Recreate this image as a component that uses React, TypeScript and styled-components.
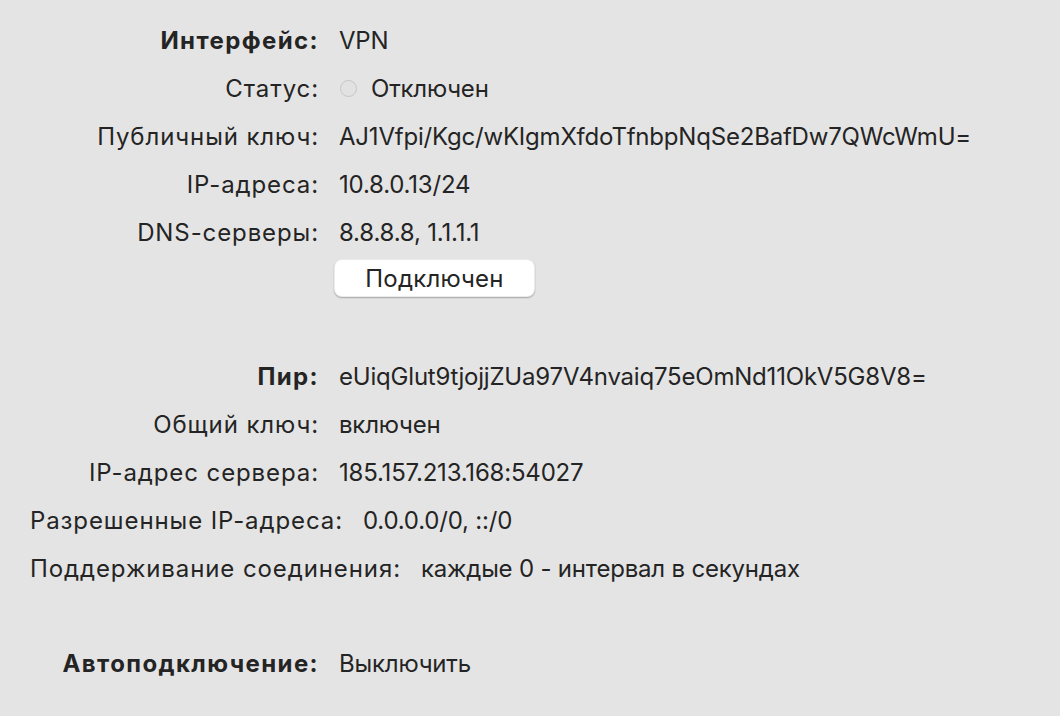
import React from 'react';
import styled, { createGlobalStyle } from 'styled-components';

const GlobalStyle = createGlobalStyle`
  html, body {
    margin: 0;
    padding: 0;
    background: #e4e4e4;
  }
  body {
    font-family: Inter, "Noto Sans", "Liberation Sans", sans-serif;
    color: #242424;
    -webkit-font-smoothing: antialiased;
  }
`;

const Page = styled.div`
  width: 1060px;
  height: 716px;
  box-sizing: border-box;
  padding-top: 16px;
  background: #e4e4e4;
  overflow: hidden;
`;

const Section = styled.div<{ $gap?: number }>`
  display: flex;
  flex-direction: column;
  margin-top: ${p => p.$gap ?? 0}px;
`;

const Row = styled.div`
  display: flex;
  align-items: center;
  height: 48px;
  gap: 20px;
  padding-left: 30px;
  font-size: 24px;
  white-space: nowrap;
`;

const Label = styled.div<{ $bold?: boolean }>`
  min-width: 289px;
  text-align: right;
  letter-spacing: ${p => (p.$bold ? 1.4 : 0.9)}px;
  font-weight: ${p => (p.$bold ? 700 : 400)};
`;

const Value = styled.div`
  display: flex;
  align-items: center;
  gap: 14px;
  letter-spacing: -0.2px;
`;

const StatusDot = styled.span`
  width: 17px;
  height: 17px;
  margin-left: 1px;
  border-radius: 50%;
  background: #e2e2e2;
  border: 1px solid #c6c6c6;
  box-sizing: border-box;
`;

const ButtonRow = styled.div`
  display: flex;
  align-items: center;
  height: 44px;
  padding-left: 334px;
`;

const Button = styled.button`
  width: 201px;
  height: 38px;
  padding: 0;
  background: #ffffff;
  border: 0.5px solid rgba(0, 0, 0, 0.08);
  border-radius: 8px;
  box-shadow: 0 1px 1.5px rgba(0, 0, 0, 0.28);
  font-family: inherit;
  font-size: 24px;
  letter-spacing: 0.2px;
  color: #242424;
  cursor: pointer;
`;

const interfaceRows = [
  { label: 'Публичный ключ:', value: 'AJ1Vfpi/Kgc/wKIgmXfdoTfnbpNqSe2BafDw7QWcWmU=' },
  { label: 'IP-адреса:', value: '10.8.0.13/24' },
  { label: 'DNS-серверы:', value: '8.8.8.8, 1.1.1.1' },
];

const peerRows = [
  { label: 'Общий ключ:', value: 'включен' },
  { label: 'IP-адрес сервера:', value: '185.157.213.168:54027' },
  { label: 'Разрешенные IP-адреса:', value: '0.0.0.0/0, ::/0' },
  { label: 'Поддерживание соединения:', value: 'каждые 0 - интервал в секундах' },
];

export default function App() {
  return (
    <Page>
      <GlobalStyle />
      <Section>
        <Row>
          <Label $bold>Интерфейс:</Label>
          <Value>VPN</Value>
        </Row>
        <Row>
          <Label>Статус:</Label>
          <Value>
            <StatusDot />
            Отключен
          </Value>
        </Row>
        {interfaceRows.map(r => (
          <Row key={r.label}>
            <Label>{r.label}</Label>
            <Value>{r.value}</Value>
          </Row>
        ))}
        <ButtonRow>
          <Button>Подключен</Button>
        </ButtonRow>
      </Section>

      <Section $gap={52}>
        <Row>
          <Label $bold>Пир:</Label>
          <Value>eUiqGlut9tjojjZUa97V4nvaiq75eOmNd11OkV5G8V8=</Value>
        </Row>
        {peerRows.map(r => (
          <Row key={r.label}>
            <Label>{r.label}</Label>
            <Value>{r.value}</Value>
          </Row>
        ))}
      </Section>

      <Section $gap={47}>
        <Row>
          <Label $bold>Автоподключение:</Label>
          <Value>Выключить</Value>
        </Row>
      </Section>
    </Page>
  );
}
